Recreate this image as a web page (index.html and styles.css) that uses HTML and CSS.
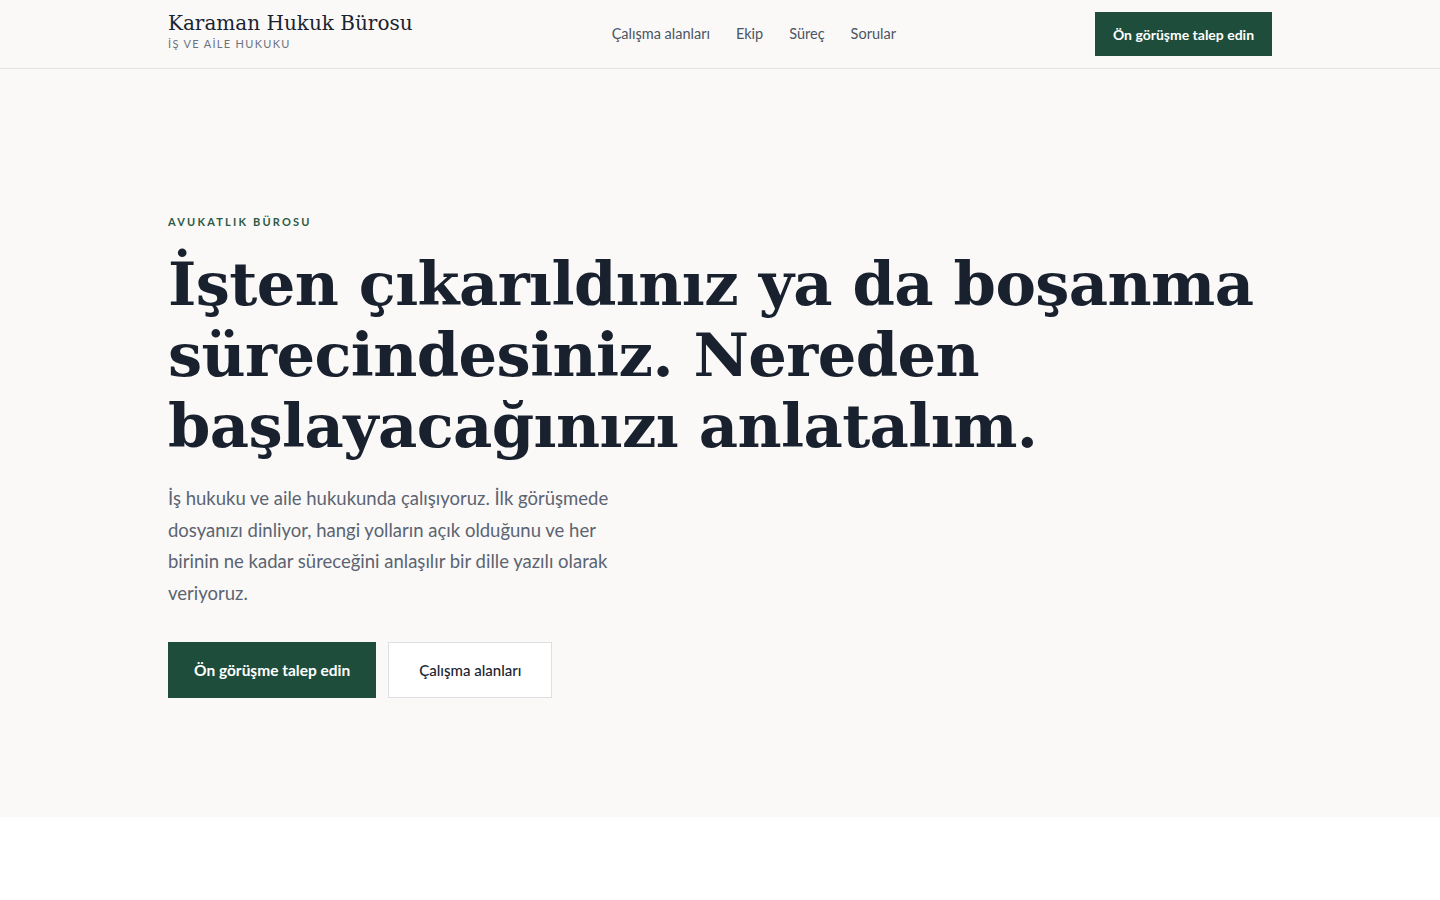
FILE: index.html
```html
<!DOCTYPE html>
<html lang="tr">
<head>
<meta charset="utf-8">
<title>Karaman Hukuk Bürosu</title>
<link rel="stylesheet" href="styles.css">
</head>
<body>
<header class="site-header">
  <div class="container header-inner">
    <a class="brand" href="#">
      <span class="brand-name">Karaman Hukuk Bürosu</span>
      <span class="brand-sub">İŞ VE AİLE HUKUKU</span>
    </a>
    <nav class="nav">
      <a href="#">Çalışma alanları</a>
      <a href="#">Ekip</a>
      <a href="#">Süreç</a>
      <a href="#">Sorular</a>
    </nav>
    <a class="btn btn-primary btn-sm" href="#">Ön görüşme talep edin</a>
  </div>
</header>
<main>
  <section class="hero">
    <div class="container">
      <p class="eyebrow">AVUKATLIK BÜROSU</p>
      <h1 class="hero-title">İşten çıkarıldınız ya da boşanma sürecindesiniz. Nereden başlayacağınızı anlatalım.</h1>
      <p class="hero-lead">İş hukuku ve aile hukukunda çalışıyoruz. İlk görüşmede dosyanızı dinliyor, hangi yolların açık olduğunu ve her birinin ne kadar süreceğini anlaşılır bir dille yazılı olarak veriyoruz.</p>
      <div class="hero-actions">
        <a class="btn btn-primary btn-lg" href="#">Ön görüşme talep edin</a>
        <a class="btn btn-outline btn-lg" href="#">Çalışma alanları</a>
      </div>
    </div>
  </section>
</main>
</body>
</html>
```
FILE: styles.css
```css
* { box-sizing: border-box; }
html, body { margin: 0; padding: 0; }
body {
  background: #ffffff;
  color: #1a2330;
  font-family: "Lato", "Noto Sans", sans-serif;
}
a { text-decoration: none; color: inherit; }
.container {
  max-width: 1104px;
  margin: 0 auto;
}
.site-header {
  background: #faf9f7;
  border-bottom: 1px solid #e6e4e1;
}
.header-inner {
  height: 68px;
  display: flex;
  align-items: center;
  justify-content: space-between;
}
.brand {
  display: flex;
  flex-direction: column;
  gap: 3px;
  margin-top: -6px;
}
.brand-name {
  font-family: "DejaVu Serif", "Liberation Serif", serif;
  font-size: 20px;
  color: #1a2330;
  line-height: 1.1;
}
.brand-sub {
  font-size: 11px;
  letter-spacing: 0.12em;
  color: #6b7280;
}
.nav {
  display: flex;
  gap: 26px;
  font-size: 14.5px;
  color: #4b5563;
  margin-top: -2px;
}
.btn {
  display: inline-flex;
  align-items: center;
  justify-content: center;
  font-weight: 700;
}
.btn-primary {
  background: #1f4d3c;
  color: #ffffff;
}
.btn-sm {
  width: 177px;
  height: 44px;
  font-size: 14px;
}
.hero {
  background: #faf9f7;
  padding: 146px 0 119px;
}
.eyebrow {
  margin: 0 0 20px;
  font-size: 11px;
  font-weight: 700;
  letter-spacing: 0.2em;
  color: #2d5a45;
}
.hero-title {
  margin: 0;
  font-family: "DejaVu Serif", "Liberation Serif", serif;
  font-size: 60.7px;
  line-height: 71px;
  font-weight: 700;
  color: #18212d;
  letter-spacing: -0.01em;
}
.hero-lead {
  margin: 22px 0 32px;
  max-width: 460px;
  font-size: 18.5px;
  line-height: 31.7px;
  color: #5b6472;
}
.hero-actions {
  display: flex;
  gap: 12px;
}
.btn-lg {
  height: 56px;
  padding: 0 26px;
  font-size: 15.5px;
}
.btn-outline {
  background: #ffffff;
  border: 1px solid #dedfe3;
  color: #1a2330;
  font-weight: 500;
  font-size: 15px;
  padding: 0 30px;
}
```
